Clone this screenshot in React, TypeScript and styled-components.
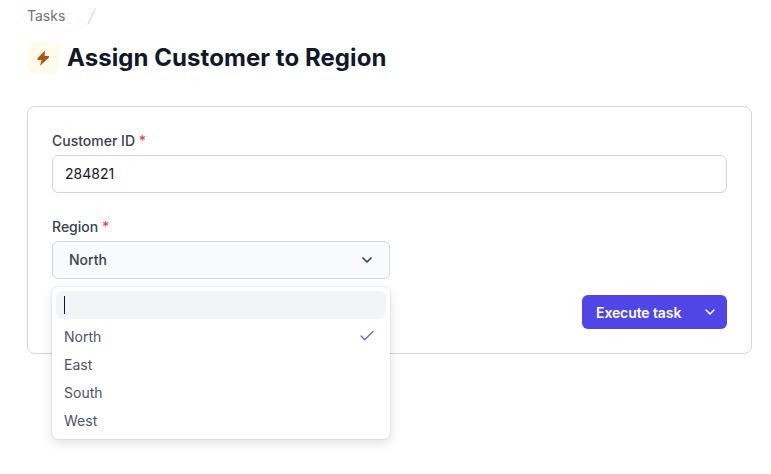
import styled, { createGlobalStyle } from 'styled-components';
import { ChevronDown, Check } from 'lucide-react';

const regions = ['North', 'East', 'South', 'West'];

const GlobalStyle = createGlobalStyle`
  html, body {
    margin: 0;
    padding: 0;
    background: #fff;
    font-family: Inter, "Liberation Sans", sans-serif;
    overflow: hidden;
  }
  * {
    box-sizing: border-box;
  }
`;

const Page = styled.div`
  width: 771px;
  height: 474px;
  padding: 8px 19px 0 27px;
`;

const Breadcrumb = styled.div`
  display: flex;
  align-items: flex-start;
  gap: 22px;
  height: 16px;
  font-size: 14px;
  line-height: 15px;
  color: #6b7280;
`;

const Header = styled.div`
  display: flex;
  align-items: center;
  gap: 8px;
  margin-top: 18px;
`;

const IconBadge = styled.div`
  display: flex;
  align-items: center;
  justify-content: center;
  width: 32px;
  height: 32px;
  border-radius: 8px;
  background: #fffbeb;
`;

const Title = styled.h1`
  margin: 0;
  font-size: 24px;
  line-height: 32px;
  font-weight: 700;
  letter-spacing: 0.06px;
  color: #111827;
`;

const Card = styled.div`
  position: relative;
  height: 248px;
  margin-top: 32px;
  padding: 24px;
  border: 1px solid #d1d5db;
  border-radius: 8px;
`;

const Field = styled.div`
  display: flex;
  flex-direction: column;
  margin-bottom: 24px;
`;

const Label = styled.label`
  height: 24px;
  font-size: 14px;
  line-height: 20px;
  font-weight: 500;
  color: #374151;
`;

const Required = styled.span`
  color: #ef4444;
`;

const Input = styled.div`
  display: flex;
  align-items: center;
  height: 38px;
  padding: 0 12px 1px;
  border: 1px solid #d1d5db;
  border-radius: 6px;
  font-size: 14px;
  color: #111827;
`;

const Select = styled.div`
  display: flex;
  align-items: center;
  justify-content: space-between;
  width: 338px;
  height: 38px;
  padding: 0 14px 1px 16px;
  border: 1px solid #d1d5db;
  border-radius: 6px;
  background: #f9fafb;
  font-size: 14px;
  font-weight: 500;
  color: #374151;
`;

const Menu = styled.div`
  position: absolute;
  top: 180px;
  left: 24px;
  z-index: 2;
  width: 338px;
  height: 152px;
  padding: 4px;
  background: #fff;
  border-radius: 6px;
  box-shadow: 0 0 0 1px rgba(0, 0, 0, 0.05), 0 4px 12px rgba(0, 0, 0, 0.12);
`;

const Search = styled.div`
  display: flex;
  align-items: center;
  height: 28px;
  padding-left: 8px;
  margin-bottom: 3px;
  border-radius: 6px;
  background: #f3f4f6;
`;

const Caret = styled.span`
  width: 1px;
  height: 18px;
  background: #111827;
`;

const Option = styled.div`
  display: flex;
  align-items: center;
  justify-content: space-between;
  height: 28px;
  padding: 0 10px 0 8px;
  font-size: 14px;
  color: #4b5563;
`;

const Footer = styled.div`
  position: absolute;
  right: 24px;
  bottom: 24px;
  display: flex;
`;

const ExecuteButton = styled.button`
  display: flex;
  align-items: center;
  justify-content: space-between;
  width: 145px;
  height: 34px;
  padding: 0 9px 0 14px;
  border: none;
  border-radius: 6px;
  background: #4f46e5;
  color: #fff;
  font-family: inherit;
  font-size: 14px;
  font-weight: 600;
  letter-spacing: -0.1px;
`;

export default function App() {
  return (
    <Page>
      <GlobalStyle />
      <Breadcrumb>
        Tasks
        <svg width="9" height="17" viewBox="0 0 9 17">
          <path d="M8.5 0.5 0.5 16.5" stroke="#d1d5db" strokeWidth="1" fill="none" />
        </svg>
      </Breadcrumb>
      <Header>
        <IconBadge>
          <svg width="16" height="16" viewBox="0 0 16 16">
            <path d="M10 .5 2.4 8.6V10h4.2L5 15.7 14 7.4V6H9.6L10 .5Z" fill="#b45309" />
          </svg>
        </IconBadge>
        <Title>Assign Customer to Region</Title>
      </Header>
      <Card>
        <Field>
          <Label>
            Customer ID <Required>*</Required>
          </Label>
          <Input>284821</Input>
        </Field>
        <Field>
          <Label>
            Region <Required>*</Required>
          </Label>
          <Select>
            North
            <ChevronDown size={16} strokeWidth={2.5} color="#374151" />
          </Select>
        </Field>
        <Menu>
          <Search>
            <Caret />
          </Search>
          {regions.map((region) => (
            <Option key={region}>
              {region}
              {region === 'North' && <Check size={18} strokeWidth={1.8} color="#6366f1" />}
            </Option>
          ))}
        </Menu>
        <Footer>
          <ExecuteButton>
            Execute task
            <ChevronDown size={16} strokeWidth={2.2} color="#fff" />
          </ExecuteButton>
        </Footer>
      </Card>
    </Page>
  );
}
